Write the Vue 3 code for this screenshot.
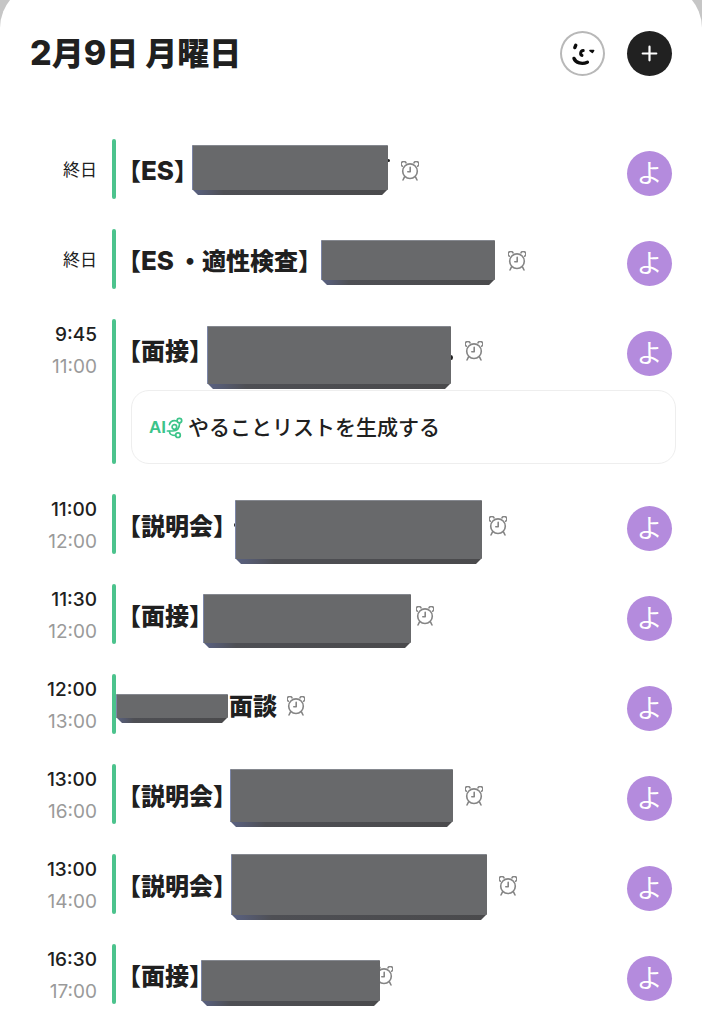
<script setup>
const events = [
  { allDay: true, latin: 'ES', slot: 205, mask: [6, 6, 196, 50], speck: [201, 20, 3, 3] },
  { allDay: true, latin: 'ES', label: '・適性検査', slot: 188, mask: [11, 11, 174, 45] },
  { start: '9:45', end: '11:00', label: '面接', slot: 254, mask: [6, 7, 244, 63], speck: [248, 36, 4, 5], todo: true },
  { start: '11:00', end: '12:00', label: '説明会', slot: 254, mask: [10, 6, 247, 64], speck: [9, 29, 3, 4] },
  { start: '11:30', end: '12:00', label: '面接', slot: 205, mask: [2, 10, 208, 54] },
  { start: '12:00', end: '13:00', suffix: '面談', slot: 100, mask: [-13, 20, 112, 29] },
  { start: '13:00', end: '16:00', label: '説明会', slot: 230, mask: [5, 5, 223, 58] },
  { start: '13:00', end: '14:00', label: '説明会', slot: 264, mask: [6, 0, 256, 66] },
  { start: '16:30', end: '17:00', label: '面接', slot: 164, mask: [0, 16, 179, 46] },
]

const box = ([x, y, w, h]) => ({
  left: `${x}px`,
  top: `${y}px`,
  width: `${w}px`,
  height: `${h}px`,
})
</script>

<template>
  <div class="backdrop">
    <main class="sheet">
      <header class="header">
        <h1><span class="digit">2</span>月<span class="digit">9</span>日 月曜日</h1>
        <div class="actions">
          <button class="round face" type="button" aria-label="スタンプ">
            <svg viewBox="0 0 45 45" fill="none" stroke="#0c0c0c" stroke-linecap="round" stroke-linejoin="round">
              <path d="M15.8 14.2 L14.8 16.6" stroke-width="3.4" />
              <path d="M23.2 19.6 C20.4 19.8 19.8 23.4 22 24.4" stroke-width="3" />
              <path d="M30 19.6 L33.6 19.6 L32.4 21.4 Z" stroke-width="1.6" fill="#0c0c0c" />
              <path d="M14 27.4 C15.6 32 22 33.6 27.4 31.2" stroke-width="3.4" />
            </svg>
          </button>
          <button class="round add" type="button" aria-label="追加">
            <svg viewBox="0 0 45 45" fill="none" stroke="#fff" stroke-width="2.2" stroke-linecap="round">
              <path d="M22.5 15.7 V29.3 M15.7 22.5 H29.3" />
            </svg>
          </button>
        </div>
      </header>

      <ul class="list">
        <li v-for="(e, i) in events" :key="i" class="event">
          <div class="time">
            <span v-if="e.allDay" class="all-day">終日</span>
            <template v-else>
              <time class="start">{{ e.start }}</time>
              <time class="end">{{ e.end }}</time>
            </template>
          </div>
          <div class="bar"></div>
          <div class="title">
            <span v-if="!e.suffix" class="name"><span class="bracket">【</span><span v-if="e.latin" class="latin" :class="{ joined: e.label }">{{ e.latin }}</span>{{ e.label }}<span class="bracket">】</span></span>
            <span class="slot" :style="{ width: `${e.slot}px` }">
              <span v-if="e.speck" class="speck" :style="box(e.speck)"></span>
              <span class="mask" :style="box(e.mask)"><span class="face-top"></span></span>
            </span>
            <span v-if="e.suffix" class="name">{{ e.suffix }}</span>
            <svg class="clock" viewBox="0 0 18 20" fill="none" stroke="#858585" stroke-width="1.6" stroke-linecap="round" stroke-linejoin="round">
              <circle cx="9" cy="10.2" r="7.3" />
              <path d="M1.3 5.2 A2.6 2.6 0 1 1 5 1.8" />
              <path d="M16.7 5.2 A2.6 2.6 0 1 0 13 1.8" />
              <path d="M3.4 16.2 L2 19 M14.6 16.2 L16 19" />
              <path d="M9.2 6.4 V10.8 H6.8" />
            </svg>
          </div>
          <span class="avatar">よ</span>
          <button v-if="e.todo" class="todo" type="button">
            <span class="ai">AI</span>
            <svg class="circuit" viewBox="0 0 17 22" fill="none" stroke="#3cc48a" stroke-width="1.7" stroke-linecap="round">
              <circle cx="13.4" cy="3.6" r="2.3" />
              <circle cx="8.4" cy="10" r="2.3" />
              <circle cx="12" cy="18.2" r="2.3" />
              <path d="M10.9 4 C7 3 4.4 4.4 3.4 7.6" />
              <path d="M13.6 6.2 C13.4 10.6 11.4 14 7 14 H1.4" />
              <path d="M3.4 14.4 C3.8 17.8 5.6 18.4 9.4 18.4" />
            </svg>
            <span>やることリストを生成する</span>
          </button>
        </li>
      </ul>
    </main>
  </div>
</template>

<style>
body {
  background: #fff;
}
</style>

<style scoped>
.backdrop {
  height: 100vh;
  overflow: hidden;
  background: #c6c6c6;
  font-family: Inter, "Noto Sans CJK JP", sans-serif;
  color: #202020;
}
.sheet {
  margin-top: -16px;
  padding-top: 16px;
  min-height: 100vh;
  border-radius: 44px 44px 0 0;
  background: #fff;
}
.header {
  display: flex;
  align-items: center;
  justify-content: space-between;
  height: 107px;
  padding: 0 30px;
}
h1 {
  margin: 0;
  font-size: 32px;
  line-height: 40px;
  font-weight: 800;
}
.digit {
  font-size: 34px;
}
.actions {
  display: flex;
  gap: 22px;
}
.round {
  width: 45px;
  height: 45px;
  padding: 0;
  border: 0;
  border-radius: 50%;
  background: #fff;
}
.round svg {
  display: block;
  width: 45px;
  height: 45px;
}
.face {
  box-shadow: inset 0 0 0 2px #b8b8b8;
}
.add {
  background: #212121;
}
.list {
  display: grid;
  gap: 30px;
  margin: 0;
  padding: 32px 26px 0 0;
  list-style: none;
}
.event {
  display: grid;
  grid-template-columns: 97px 4px 1fr auto;
  column-gap: 15px;
  grid-template-rows: 60px;
  row-gap: 11px;
}
.time {
  display: flex;
  flex-direction: column;
  align-items: flex-end;
  font-size: 19px;
  line-height: 32px;
}
.start {
  font-weight: 500;
}
.end {
  color: #9a9a9a;
}
.all-day {
  font-size: 17px;
  line-height: 62px;
}
.bar {
  grid-row: 1 / span 2;
  grid-column: 2;
  border-radius: 2px;
  background: #4cc38d;
}
.event:not(:has(.todo)) .bar {
  grid-row: 1;
}
.title {
  display: flex;
  align-items: center;
  grid-column: 3;
  margin-left: -2px;
  min-width: 0;
  white-space: nowrap;
}
.name {
  padding-top: 2px;
  font-family: "Noto Sans CJK JP", sans-serif;
  font-size: 24px;
  line-height: 36px;
  font-weight: 800;
}
.latin {
  font-family: Inter, sans-serif;
  font-size: 26px;
}
.joined {
  margin-right: 4px;
}
.bracket {
  font-feature-settings: "halt";
}
.slot {
  position: relative;
  align-self: stretch;
  flex: none;
}
.mask {
  position: absolute;
  z-index: 1;
  overflow: hidden;
  border-radius: 2px;
  background: linear-gradient(90deg, #5a6283, #4e4f54 16%, #4a4a4c);
  clip-path: polygon(0 0, 100% 0, 100% calc(100% - 6px), calc(100% - 6px) 100%, 6px 100%, 0 calc(100% - 6px));
}
.face-top {
  position: absolute;
  inset: 0 0 5px;
  border-top: 1px solid #85888f;
  border-left: 1px solid #7c86a8;
  background: #68696b;
}
.speck {
  position: absolute;
  border-radius: 50%;
  background: #202020;
}
.clock {
  flex: none;
  width: 18px;
  height: 20px;
  margin-left: 10px;
  padding-top: 4px;
}
.avatar {
  display: flex;
  align-items: center;
  justify-content: center;
  width: 45px;
  height: 45px;
  margin: 12px 4px 0 0;
  border-radius: 50%;
  background: #b48bdd;
  color: #fff;
  font-size: 26px;
  line-height: 26px;
}
.todo {
  display: flex;
  align-items: center;
  grid-column: 3 / 5;
  height: 74px;
  padding: 2px 17px 0;
  border: 1px solid #eeeeee;
  border-radius: 18px;
  background: #fff;
  color: #202020;
  font-family: inherit;
  font-size: 21px;
  line-height: 30px;
  font-weight: 500;
}
.ai {
  color: #3cc48a;
  font-family: "Liberation Sans Narrow", "Liberation Sans", sans-serif;
  font-size: 17px;
  font-weight: 700;
}
.circuit {
  width: 17px;
  height: 22px;
  margin-right: 5px;
}
</style>
